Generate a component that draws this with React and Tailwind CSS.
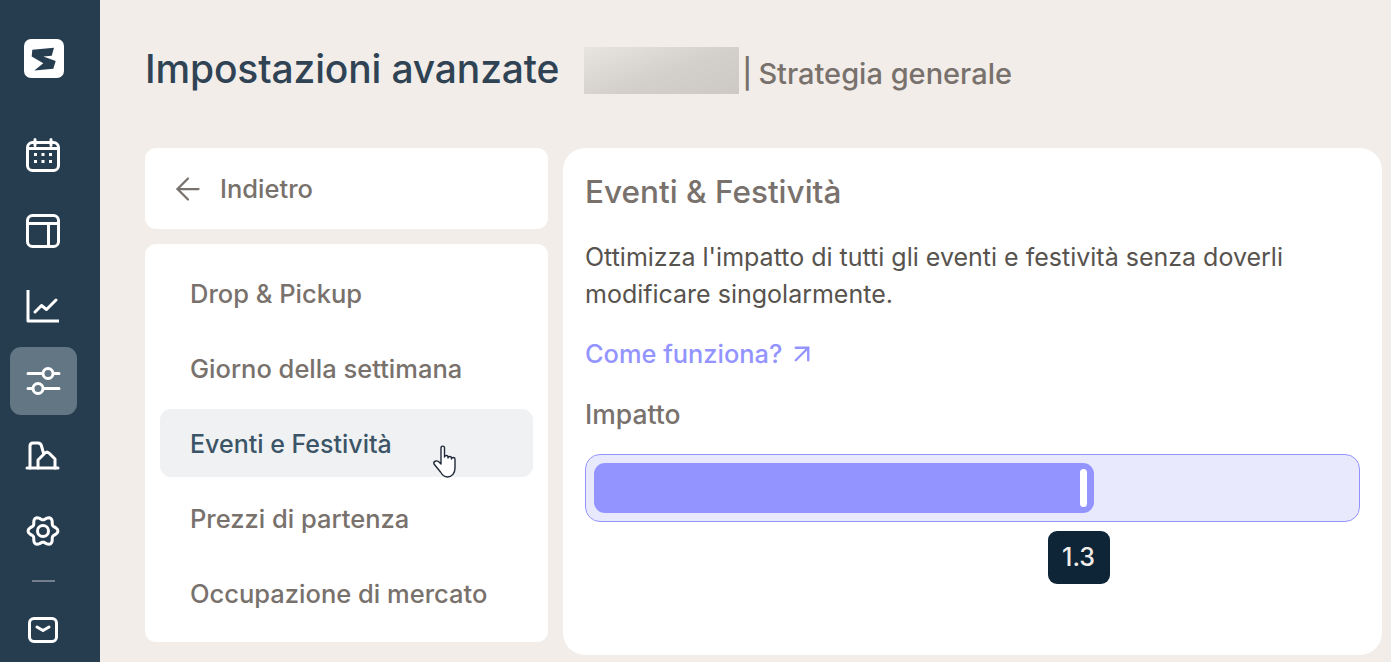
import React from "react";
import { ArrowLeft, ArrowUpRight } from "lucide-react";

const Icon = ({ children, size = 36 }) => (
  <svg width={size} height={size} viewBox="0 0 36 36" fill="none" stroke="white" strokeWidth="3" strokeLinecap="round" strokeLinejoin="round">
    {children}
  </svg>
);

const NavItem = ({ active, children }) => (
  <div className={`w-[67px] h-[68px] shrink-0 flex items-center justify-center rounded-[11px] pr-[1px] ${active ? "bg-[#627684]" : ""}`}>
    {children}
  </div>
);

// six lobed outline of the settings gear
const gearPath = () => {
  const pts = [];
  for (let i = 0; i < 72; i++) {
    const t = (i / 72) * Math.PI * 2;
    const r = 13 - 1.9 * Math.cos(6 * t);
    pts.push(`${(18 + r * Math.sin(t)).toFixed(2)} ${(18 - r * Math.cos(t)).toFixed(2)}`);
  }
  return `M${pts.join("L")}Z`;
};

const menu = ["Drop & Pickup", "Giorno della settimana", "Eventi e Festività", "Prezzi di partenza", "Occupazione di mercato"];

export default function App() {
  return (
    <div className="h-screen w-full flex overflow-hidden bg-[#f2ede9] font-['Inter',sans-serif]">
      {/* sidebar */}
      <aside className="w-[100px] shrink-0 bg-[#263d50] pl-[10px] flex flex-col">
        <div className="w-[67px] h-[40px] mt-[38px] mb-[44px] flex items-center justify-center shrink-0">
          <svg width="40" height="39" viewBox="0 0 40 39">
            <rect width="40" height="39" rx="7" fill="white" />
            <path d="M8.300 10.800L30 8.800L27.700 16.800L19.300 17.500L31.700 22L29.300 29.800L10.300 31.500L19.300 24.200L7.700 17.500Z" fill="#263d50" />
          </svg>
        </div>
        <div className="flex flex-col gap-[7px]">
          <NavItem>
            <Icon>
              <rect x="2.500" y="4.500" width="31" height="28" rx="5" />
              <path d="M10 1.500v6M26 1.500v6M3 10.500h30" />
              <path d="M9 16.500h3M16.500 16.500h3M24 16.500h3M9 23.500h3M16.500 23.500h3M24 23.500h3" strokeWidth="3" strokeLinecap="butt" />
            </Icon>
          </NavItem>
          <NavItem>
            <Icon>
              <rect x="2.500" y="2.500" width="31" height="31" rx="5" />
              <path d="M3 10.500h30M23.500 10.500v23" />
            </Icon>
          </NavItem>
          <NavItem>
            <Icon>
              <path d="M3 2v31h31" strokeLinecap="butt" />
              <path d="M10 24l6.500-6.500 5 4L31 12" />
            </Icon>
          </NavItem>
          <NavItem active>
            <Icon>
              <path d="M3 10.500h31M3 25.500h31" />
              <circle cx="23" cy="10.500" r="5" fill="#627684" />
              <circle cx="13" cy="25.500" r="5" fill="#627684" />
            </Icon>
          </NavItem>
          <NavItem>
            <Icon>
              <path d="M2 30h31" />
              <path d="M5 30V8c0-2 1-3 3-3h5c2 0 3 1 3.500 3l2 7" />
              <path d="M13 30v-8l7-7 2-1 2 1 6 6v9" />
            </Icon>
          </NavItem>
          <NavItem>
            <Icon>
              <path d={gearPath()} />
              <circle cx="18" cy="18" r="5.500" />
            </Icon>
          </NavItem>
        </div>
        <div className="w-[23px] h-[2px] bg-[#71808c] ml-[22px] mt-[15px] shrink-0" />
        <div className="w-[67px] flex justify-center mt-[35px] pr-[1px]">
          <svg width="30" height="26" viewBox="0 0 30 26" fill="none" stroke="white" strokeWidth="3" strokeLinecap="round" strokeLinejoin="round">
            <rect x="1.500" y="1.500" width="27" height="23" rx="4.500" />
            <path d="M9 10l6 3.500 6-3.500" />
          </svg>
        </div>
      </aside>

      {/* main */}
      <main className="flex-1 min-w-0 pl-[45px] pr-[9px] pt-[47px]">
        <header className="flex items-center h-[47px]">
          <h1 className="text-[39px] font-medium text-[#2f4354] leading-none -mt-[5px] tracking-[-0.15px]">Impostazioni avanzate</h1>
          <div className="w-[155px] h-[47px] ml-[25px] bg-[linear-gradient(160deg,#e8e4e0_0%,#d3cfcb_55%,#cdc9c5_100%)]" />
          <div className="ml-[3px] flex text-[29px] font-medium text-[#78716c] mt-[6px]">
            <span>|</span>
            <span className="ml-[6px]">Strategia generale</span>
          </div>
        </header>

        <div className="flex gap-[15px] mt-[54px]">
          <div className="w-[403px] shrink-0 flex flex-col gap-[15px]">
            <div className="h-[81px] bg-white rounded-[11px] flex items-center pl-[25px] pt-[1px] gap-[14px] text-[#78716c]">
              <ArrowLeft size={36} strokeWidth={1.5} />
              <span className="text-[25.5px] font-medium">Indietro</span>
            </div>
            <div className="h-[398px] bg-white rounded-[11px] p-[15px] flex flex-col gap-[7px]">
              {menu.map((m) => (
                <div
                  key={m}
                  className={`h-[68px] shrink-0 rounded-[11px] pl-[30px] pt-[3px] flex items-center text-[25.5px] font-medium relative ${
                    m === "Eventi e Festività" ? "bg-[#f0f1f3] text-[#3b5567]" : "text-[#78716c]"
                  }`}
                >
                  {m === "Eventi e Festività" ? <span className="text-[25px]">{m}</span> : m}
                  {m === "Eventi e Festività" && (
                    <svg className="absolute left-[272px] top-[36px]" width="25" height="33" viewBox="0 0 25 33" fill="white" stroke="#1f2937" strokeWidth="1.400" strokeLinejoin="round">
                      <path d="M9 19V3c0-2.500 3.500-2.500 3.500 0V12c0-2 3.500-2 3.500 0v1c0-2 3.500-2 3.500 0v1c0-2 3.500-2 3.500 0v9c0 5-3 9-7.500 9-3.500 0-5-1.500-7-5l-6.500-8c-1-2.500 2.500-4 4.500-2.500z" />
                    </svg>
                  )}
                </div>
              ))}
            </div>
          </div>

          <section className="w-[819px] h-[507px] bg-white rounded-[22px] px-[22px] pt-[24px]">
            <h2 className="text-[31.5px] font-medium text-[#78716c] leading-[40px]">Eventi &amp; Festività</h2>
            <p className="text-[25px] text-[#57534e] leading-[37px] mt-[27px]">
              Ottimizza l'impatto di tutti gli eventi e festività senza doverli
              <br />
              modificare singolarmente.
            </p>
            <div className="flex items-center gap-[5px] mt-[24px] text-[#9394ff] text-[25.4px] font-medium leading-[34px]">
              Come funziona?
              <ArrowUpRight size={30} strokeWidth={1.9} />
            </div>
            <div className="text-[26.500px] font-medium text-[#78716c] leading-[34px] mt-[26px]">Impatto</div>
            <div className="mt-[23px] h-[68px] rounded-[15px] border border-[#9394ff] bg-[#e9e9fe] p-[8px]">
              <div className="h-[50px] w-[500px] rounded-[11px] bg-[#9394ff] flex items-center justify-end pr-[7px]">
                <div className="w-[7px] h-[38px] rounded-full bg-white" />
              </div>
            </div>
            <div className="ml-[463px] mt-[9px] w-[62px] h-[53px] rounded-[9px] bg-[#0e2538] text-[#f2ede9] text-[25px] font-medium pr-[1px] flex items-center justify-center">
              1.3
            </div>
          </section>
        </div>
      </main>
    </div>
  );
}
